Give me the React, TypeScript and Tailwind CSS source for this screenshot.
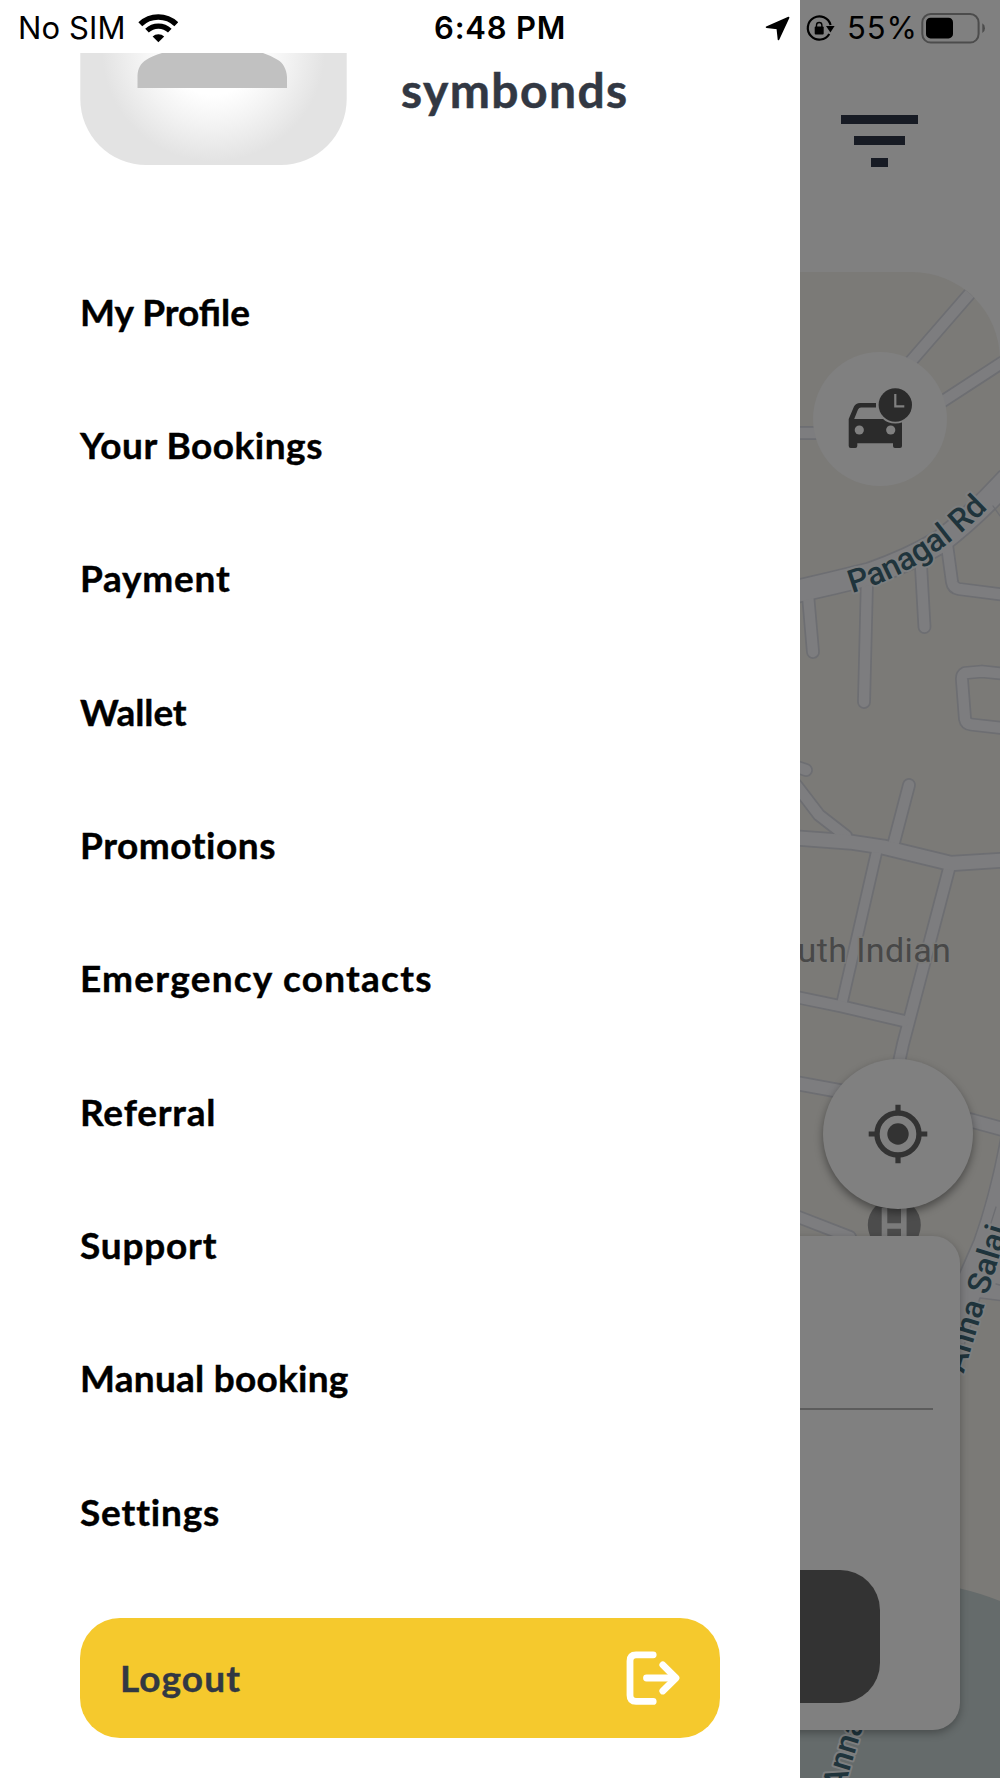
import React from "react";

interface MenuItem {
  label: string;
  className?: string; // Letter spacing for the label
}

const menuItems: MenuItem[] = [
  { label: "My Profile", className: "tracking-normal" },
  { label: "Your Bookings", className: "tracking-[0.5px]" },
  { label: "Payment", className: "tracking-[0.75px]" },
  { label: "Wallet", className: "tracking-[-0.1px]" },
  { label: "Promotions", className: "tracking-[0.55px]" },
  { label: "Emergency contacts", className: "tracking-[1.25px]" },
  { label: "Referral", className: "tracking-[0.8px]" },
  { label: "Support", className: "tracking-[0.8px]" },
  { label: "Manual booking", className: "tracking-[0.25px]" },
  { label: "Settings", className: "tracking-[0.85px]" },
];

// Streets of the map: [path, width]
const roads: [string, number][] = [
  ["M972 291 L906 367", 12],
  ["M1006 360 L940 403", 12],
  ["M796 433 L820 433", 12],
  ["M808 595 L813 652", 12],
  ["M867 580 L864 702", 12],
  ["M921 566 L924.5 627", 12],
  ["M947 545 L952 582 Q953 588 959 589 L1006 595", 12],
  ["M1006 674 L982 671.5 L965 673 Q961.5 675 962 680 L965 719 Q966 724 971 724.5 L1006 728.5", 12],
  ["M794 766 L806 770", 12],
  ["M796 785 L819 815 L846 836", 12],
  ["M909 785 L892 850", 12],
  ["M877 850 L842 1003", 11],
  ["M950 865 L903 1044 L894 1085", 12],
  ["M796 997 L842 1006.5 L904 1021", 12],
  ["M796 838 L850 842 L883 847 L951 863.5 L1006 860", 15],
  ["M796 1083 L845 1092 L973 1121 L1006 1130", 14],
  ["M796 1216 L850 1237", 12],
  ["M794 592 L833 583 L870 574 Q910 560 940 542 Q975 515 1006 481", 23],
];

const LocationArrow = () => (
  <svg className="h-[26px] w-[26px]" viewBox="764 14 26 26">
    <path d="M766.5 26.2 L788.6 16.6 L778.5 38.4 L777.3 27.4 Z" fill="#000" stroke="#000" strokeWidth="1.6" strokeLinejoin="round" />
  </svg>
);

const RotationLock = () => (
  <svg className="h-[30px] w-[30px]" viewBox="805 12 30 30">
    <path d="M829.3 33 A11.6 11.6 0 1 1 830.6 24" fill="none" stroke="#000" strokeWidth="2.2" />
    <path d="M826 25 L834.6 25 L830.4 31.4 Z" fill="#000" />
    <rect x="814.7" y="25.6" width="9" height="8" rx="1" fill="#000" />
    <path d="M816.5 26.5 V24.2 A2.7 2.7 0 0 1 821.9 24.2 V26.5" fill="none" stroke="#000" strokeWidth="1.4" />
  </svg>
);

const WifiIcon = () => (
  <svg className="h-[30px] w-[40px]" viewBox="138 12 40 30">
    <path d="M140.3 23.3 A26 26 0 0 1 176.3 23.3" fill="none" stroke="#000" strokeWidth="5.6" />
    <path d="M147 29.6 A16.5 16.5 0 0 1 169.8 29.6" fill="none" stroke="#000" strokeWidth="5.2" />
    <path d="M158.4 41.3 L152.6 35.6 A8.2 8.2 0 0 1 164.2 35.6 Z" fill="#000" />
  </svg>
);

const BatteryIcon = () => (
  <svg className="h-[32px] w-[65px]" viewBox="920 10 65 32">
    <rect x="922.3" y="12" width="56.3" height="28.6" rx="8.5" fill="none" stroke="#4c4c4c" strokeWidth="2" />
    <rect x="926" y="15.8" width="27" height="20.6" rx="4.5" fill="#000" />
    <path d="M982.3 21.3 Q985 22.8 985 26.2 Q985 29.6 982.3 31 Z" fill="#4c4c4c" />
  </svg>
);

const StatusBar = () => (
  <div className="absolute inset-x-0 top-0 z-20 flex h-[55px] items-center font-['Inter',sans-serif] text-[31px] leading-none text-black">
    <div className="flex w-[434px] items-center pl-[18px]">
      <span className="w-[120px] tracking-[0.1px] whitespace-nowrap">No SIM</span>
      <WifiIcon />
    </div>
    <div className="w-[330px] font-semibold tracking-[0.8px]">6:48 PM</div>
    <LocationArrow />
    <div className="ml-[15px]">
      <RotationLock />
    </div>
    <div className="ml-[12px] w-[73px] tracking-[0.9px]">55%</div>
    <BatteryIcon />
  </div>
);

const Avatar = () => (
  <svg className="h-[113px] w-[267px]" viewBox="80 53 267 113">
    <defs>
      <radialGradient id="avatarGlow" gradientUnits="userSpaceOnUse" cx="213.5" cy="50" r="124">
        <stop offset="0.36" stopColor="#ffffff" />
        <stop offset="0.6" stopColor="#f3f3f3" />
        <stop offset="0.9" stopColor="#e3e3e3" />
      </radialGradient>
    </defs>
    <path d="M80.3 53 H346.7 V99 A66 66 0 0 1 280.7 165 H146.3 A66 66 0 0 1 80.3 99 Z" fill="url(#avatarGlow)" />
    <path d="M137.5 88 V76 C137.8 68 141 63 146 60 Q152 56 162 53 H263 Q272 56 278 60 C283 63 286.6 69 287 77 V88 Z" fill="#c1c1c1" />
  </svg>
);

const LogoutIcon = () => (
  <svg className="h-[56px] w-[56px]" viewBox="625 1650 56 56" fill="none" stroke="#fff" strokeWidth="6.8" strokeLinecap="round" strokeLinejoin="round">
    <path d="M653.2 1654.8 H636 Q630 1654.8 630 1661 V1695.3 Q630 1701.4 636 1701.4 H653.2" />
    <path d="M646.5 1678 H675" />
    <path d="M662.8 1664.8 L676 1678 L662.8 1691" />
  </svg>
);

const Drawer = () => (
  <aside className="z-10 flex w-[800px] shrink-0 flex-col bg-white px-[80px] pt-[53px] font-['Lato',sans-serif] font-bold">
    {/* Profile header */}
    <div className="flex h-[194px] items-start gap-[54px]">
      <Avatar />
      <div className="mt-[9px] text-[48px] leading-[56px] tracking-[1.4px] text-[#323843] [-webkit-text-stroke:0.5px_#323843]">symbonds</div>
    </div>

    {/* Menu */}
    <nav className="flex flex-col">
      {menuItems.map((item) => (
        <a
          key={item.label}
          className={`flex h-[133.33px] items-center pb-[5px] text-[37px] leading-none text-black [-webkit-text-stroke:0.4px_#000] ${item.className}`}
        >
          {item.label}
        </a>
      ))}
    </nav>

    <button className="mt-[37.5px] flex h-[120px] w-[640px] shrink-0 items-center justify-between rounded-[40px] bg-[#f5c92d] pr-[39px] pl-[40px]">
      <span className="text-[37px] leading-none tracking-[1.1px] text-[#323843] [-webkit-text-stroke:0.4px_#323843]">Logout</span>
      <LogoutIcon />
    </button>
  </aside>
);

const MapCanvas = () => (
  <svg className="absolute inset-0 h-full w-full font-['Roboto',sans-serif]" viewBox="800 272 200 1506">
    <defs>
      <clipPath id="mapShape">
        <path d="M800 272 H912 A88 88 0 0 1 1000 360 V1778 H800 Z" />
      </clipPath>
      <path id="panagal" d="M852 593 Q928 571 992 504" />
    </defs>
    <g clipPath="url(#mapShape)">
      <rect x="800" y="272" width="200" height="1506" fill="#7b7a77" />
      <g fill="none" strokeLinecap="round" strokeLinejoin="round">
        {roads.map(([d, w]) => (
          <path key={d} d={d} stroke="#6d6e72" strokeWidth={w + 1.8} />
        ))}
        <path d="M1004 1120 Q992 1190 974 1240 L950 1295 L950 1340 L964 1345 L980 1298 L1004 1301 Z" fill="#7d7d7f" stroke="#6d6e72" strokeWidth="1.6" />
        {roads.map(([d, w]) => (
          <path key={d} d={d} stroke="#7d7d7f" strokeWidth={w - 1.6} />
        ))}
        <path d="M996 1207 L991 1223 M996 1284 L1000 1285 M993 506 L1000 516" stroke="#6d6e72" strokeWidth="1.3" />
      </g>
      {/* Water */}
      <path d="M800 1588 H958 Q980 1593 1000 1601 V1778 H800 Z" fill="#656b6b" />
      <g fill="#1f343c" stroke="#7d7f80" strokeWidth="4" paintOrder="stroke" strokeLinejoin="round" fontSize="32" fontWeight="500">
        <text>
          <textPath href="#panagal">Panagal Rd</textPath>
        </text>
        <text transform="translate(963.5 1374) rotate(-73)">Anna Salai</text>
        <text transform="translate(843 1792) rotate(-73)">Anna</text>
      </g>
      <text x="797.5" y="961.5" fontSize="34" letterSpacing="0.4" fill="#484848" stroke="#7b7b79" strokeWidth="3" paintOrder="stroke">
        uth Indian
      </text>
      {/* Hospital marker */}
      <circle cx="894.3" cy="1225" r="26.5" fill="#4c4c4c" />
      <path d="M884.5 1208 V1242 M903.8 1208 V1242 M884.5 1226 H903.8" stroke="#7b7b7b" strokeWidth="5.6" fill="none" />
    </g>
  </svg>
);

const CarClockIcon = () => (
  <svg className="h-[64px] w-[72px]" viewBox="844 387 72 64">
    <path
      fillRule="evenodd"
      fill="#2b2b2b"
      d="M848.7 419 L854 406.5 Q855.8 403 860 403 H876 V407.6 H861 Q859 407.6 858 409.5 L854.2 419 H902 V446 Q902 448 900 448 H895 Q893 448 893 446 V443.3 H857.3 V446 Q857.3 448 855.3 448 H850.7 Q848.7 448 848.7 446 Z"
    />
    <circle cx="859.3" cy="430" r="4.6" fill="#808080" />
    <circle cx="890.7" cy="430" r="4.6" fill="#808080" />
    <circle cx="895.3" cy="405" r="18.6" fill="#808080" />
    <circle cx="895.3" cy="405" r="16.7" fill="#2b2b2b" />
    <path d="M895.3 394 V406.4 H904.3" fill="none" stroke="#808080" strokeWidth="2.2" />
  </svg>
);

const CrosshairIcon = () => (
  <svg className="h-[60px] w-[60px]" viewBox="-30 -30 60 60">
    <circle r="21" fill="none" stroke="#333" strokeWidth="5.4" />
    <circle r="10.7" fill="#333" />
    <path d="M0 -29.3 V-21 M0 29.3 V21 M-29.3 0 H-21 M29.3 0 H21" stroke="#333" strokeWidth="5.2" />
  </svg>
);

const MapScreen = () => (
  <main className="flex w-[200px] flex-col overflow-hidden bg-[#808080]">
    <header className="flex h-[272px] shrink-0 flex-col items-center gap-[12.3px] pt-[115px] pr-[41px]">
      <div className="h-[9px] w-[77px] shrink-0 bg-[#171b24]" />
      <div className="h-[9px] w-[51px] shrink-0 bg-[#171b24]" />
      <div className="h-[9px] w-[17px] shrink-0 bg-[#171b24]" />
    </header>

    <section className="relative flex-1">
      <MapCanvas />
      <button className="absolute top-[80px] left-[13px] flex h-[134px] w-[134px] items-center justify-center rounded-full bg-[#808080] pr-px">
        <CarClockIcon />
      </button>

      {/* Booking card */}
      <div className="absolute top-[963.5px] right-[40px] flex h-[494.5px] w-[200px] flex-col items-end rounded-r-[27px] bg-[#808080] shadow-[0_3px_8px_rgba(0,0,0,0.3)]">
        <div className="mt-[172px] mr-[27px] h-[2px] w-full shrink-0 bg-[#5c5c5c]" />
        <div className="mt-[160.5px] mr-[80.5px] h-[133px] w-full shrink-0 rounded-r-[40px] bg-[#333]" />
      </div>

      <button className="absolute top-[787px] left-[23px] flex h-[150px] w-[150px] items-center justify-center rounded-full bg-[#808080] shadow-[0_4px_8px_rgba(0,0,0,0.4)]">
        <CrosshairIcon />
      </button>
    </section>
  </main>
);

const App: React.FC = () => {
  return (
    <div className="relative flex h-[1778px] w-[1000px] overflow-hidden bg-white">
      <StatusBar />
      <Drawer />
      <MapScreen />
    </div>
  );
};

export default App;
